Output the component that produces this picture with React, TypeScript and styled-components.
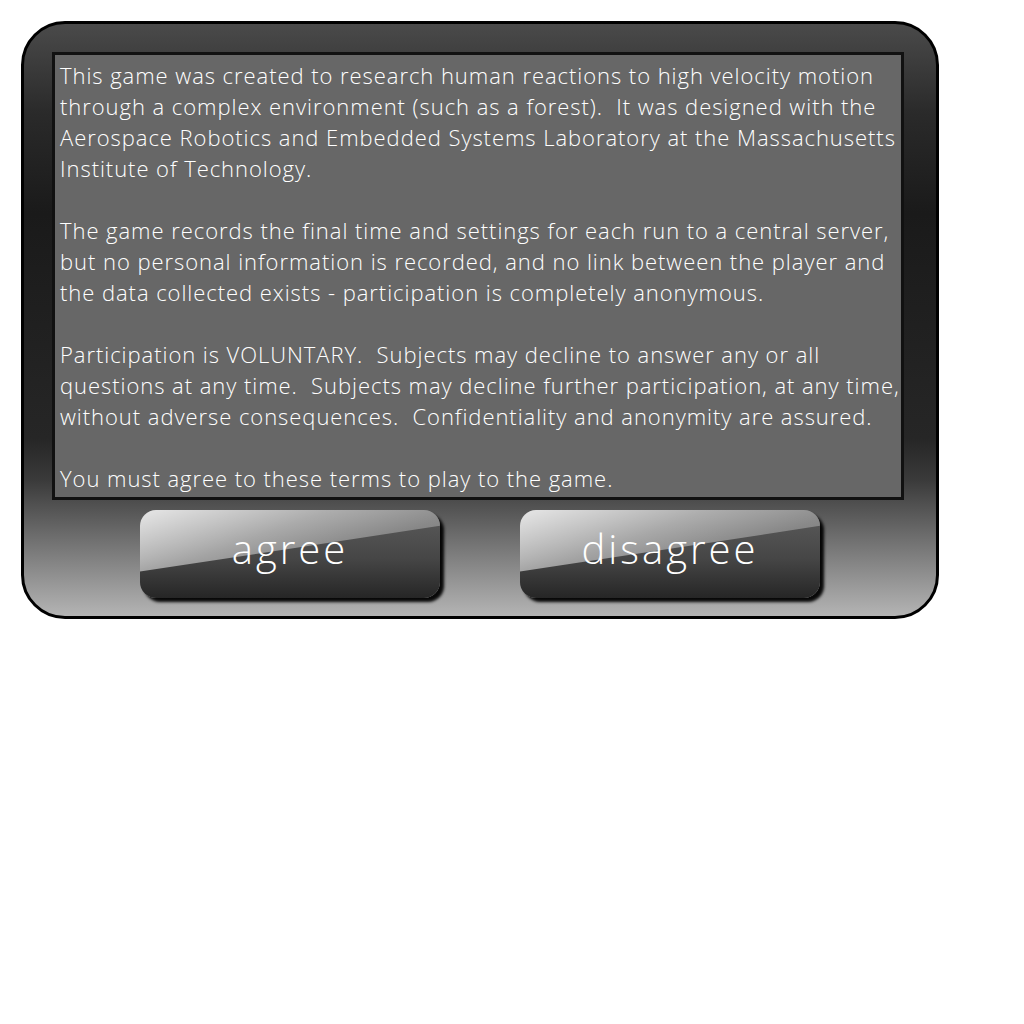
import React from 'react';
import styled, {createGlobalStyle} from 'styled-components';

const GlobalStyle = createGlobalStyle`
    html, body {
        margin: 0;
        padding: 0;
        background: #ffffff;
    }
    body {
        font-family: "Open Sans", "DejaVu Sans", sans-serif;
    }
`;

const Page = styled.div`
    padding: 21px 0 0 21px;
`;

const Panel = styled.div`
    box-sizing: border-box;
    width: 918px;
    height: 598px;
    border: 3px solid #000;
    border-radius: 44px;
    padding: 28px 32px 0 28px;
    background: linear-gradient(
        to bottom,
        #4a4a4a 0%,
        #2a2a2a 15%,
        #1a1a1a 32%,
        #262626 70%,
        #3a3a3a 77%,
        #6a6a6a 86%,
        #b4b4b4 100%
    );
    display: flex;
    flex-direction: column;
`;

const TextBox = styled.div`
    box-sizing: border-box;
    height: 448px;
    border: 3px solid #111;
    background: #676767;
    padding: 5px 0 0 5px;
    color: #ffffff;
    font-size: 22px;
    font-weight: 300;
    letter-spacing: 0.95px;
    line-height: 31px;
    white-space: nowrap;
`;

const Paragraph = styled.p`
    margin: 0 0 31px 0;
`;

const ButtonRow = styled.div`
    display: flex;
    justify-content: center;
    gap: 80px;
    margin-top: 10px;
    padding-left: 4px;
`;

const GlossButton = styled.button`
    position: relative;
    overflow: hidden;
    width: 300px;
    height: 88px;
    border: none;
    border-radius: 16px;
    background: linear-gradient(to bottom, #5c5c5c 0%, #464646 55%, #262626 100%);
    box-shadow: 4px 4px 3px rgba(0, 0, 0, 0.95);
    color: #fff;
    font-family: "Open Sans", "DejaVu Sans", sans-serif;
    font-size: 40px;
    font-weight: 300;
    letter-spacing: 3px;
    line-height: 1;
    padding: 0 0 10px 0;
    cursor: pointer;

    &::before {
        content: '';
        position: absolute;
        inset: 0;
        clip-path: polygon(0 0, 100% 0, 100% 18%, 0 70%);
        background: linear-gradient(
            160deg,
            rgba(255, 255, 255, 0.85) 0%,
            rgba(255, 255, 255, 0.5) 35%,
            rgba(255, 255, 255, 0.3) 60%,
            rgba(255, 255, 255, 0.2) 100%
        );
    }
`;

const Label = styled.span`
    position: relative;
`;

const paragraphs = [
    [
        'This game was created to research human reactions to high velocity motion',
        'through a complex environment (such as a forest).  It was designed with the',
        'Aerospace Robotics and Embedded Systems Laboratory at the Massachusetts',
        'Institute of Technology.',
    ],
    [
        'The game records the final time and settings for each run to a central server,',
        'but no personal information is recorded, and no link between the player and',
        'the data collected exists - participation is completely anonymous.',
    ],
    [
        'Participation is VOLUNTARY.  Subjects may decline to answer any or all',
        'questions at any time.  Subjects may decline further participation, at any time,',
        'without adverse consequences.  Confidentiality and anonymity are assured.',
    ],
    ['You must agree to these terms to play to the game.'],
];

export default function App() {
    return (
        <Page>
            <GlobalStyle />
            <Panel>
                <TextBox>
                    {paragraphs.map((lines, i) => (
                        <Paragraph key={i}>
                            {lines.map((line, j) => (
                                <React.Fragment key={j}>
                                    {line.replace(/  /g, '\u00a0 ')}
                                    {j < lines.length - 1 && <br />}
                                </React.Fragment>
                            ))}
                        </Paragraph>
                    ))}
                </TextBox>
                <ButtonRow>
                    <GlossButton>
                        <Label>agree</Label>
                    </GlossButton>
                    <GlossButton>
                        <Label>disagree</Label>
                    </GlossButton>
                </ButtonRow>
            </Panel>
        </Page>
    );
}
